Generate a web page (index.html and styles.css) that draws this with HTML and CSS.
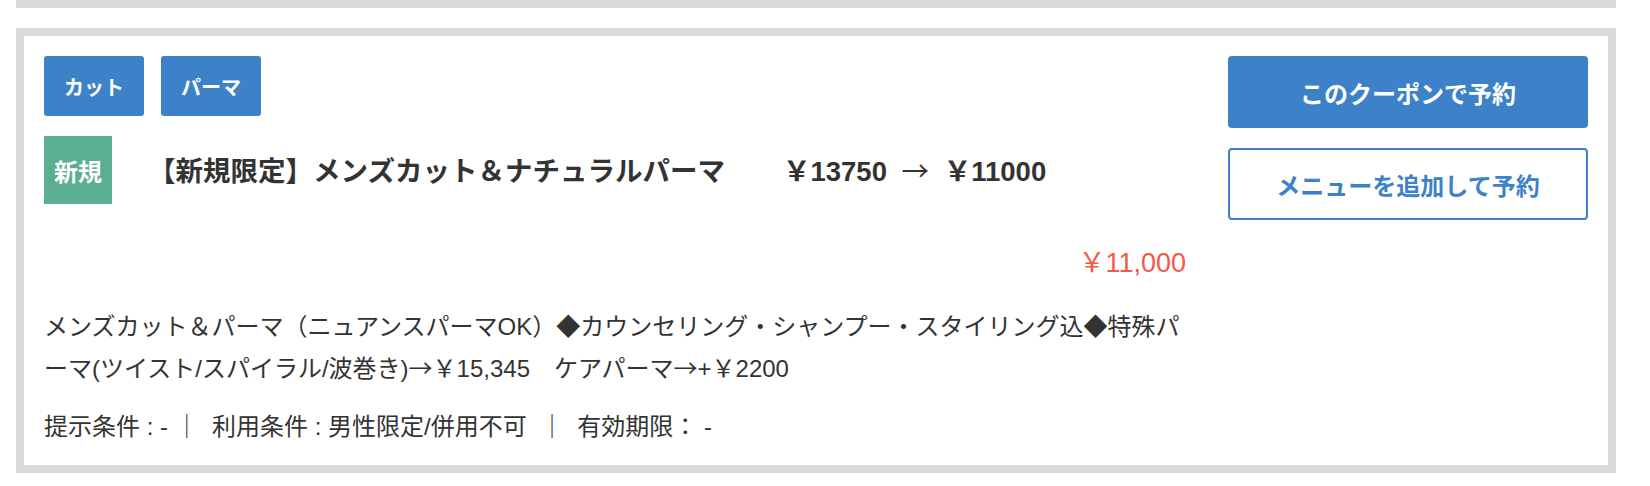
FILE: index.html
```html
<!DOCTYPE html>
<html lang="ja">
<head>
<meta charset="utf-8">
<title>クーポン</title>
<link rel="stylesheet" href="styles.css">
</head>
<body>
<div class="coupon-list">
  <div class="coupon-prev"></div>
  <section class="coupon">
    <div class="coupon-main">
      <div class="tags">
        <span class="tag">カット</span>
        <span class="tag">パーマ</span>
      </div>
      <div class="title-row">
        <span class="badge">新規</span>
        <h2 class="title">【新規限定】メンズカット＆ナチュラルパーマ<span class="title-price">￥13750 <span class="arrow">→</span> ￥11000</span></h2>
      </div>
      <div class="price">￥11,000</div>
      <p class="desc">メンズカット＆パーマ（ニュアンスパーマOK）◆カウンセリング・シャンプー・スタイリング込◆特殊パ<wbr>ーマ(ツイスト/スパイラル/波巻き)<span class="sym">→</span>￥15,345　ケアパーマ<span class="sym">→</span>+￥2200</p>
      <p class="conditions">提示条件 : - ｜  利用条件 : 男性限定/併用不可  ｜  有効期限： -</p>
    </div>
    <div class="coupon-actions">
      <a class="btn btn-primary" href="#">このクーポンで予約</a>
      <a class="btn btn-outline" href="#">メニューを追加して予約</a>
    </div>
  </section>
</div>
</body>
</html>
```
FILE: styles.css
```css
html, body {
  margin: 0;
  padding: 0;
  background: #fff;
}

body {
  font-family: "Liberation Sans", "Noto Sans CJK JP", sans-serif;
  color: #333;
}

.coupon-list {
  width: 1600px;
  margin-left: 16px;
  display: flex;
  flex-direction: column;
  gap: 20px;
}

.coupon-prev {
  height: 8px;
  background: #d9d9d9;
}

.coupon {
  border: 8px solid #d9d9d9;
  background: #fff;
  padding: 20px 20px 18px;
  display: flex;
  gap: 42px;
}

.coupon-main {
  flex: 1;
  min-width: 0;
}

.tags {
  display: flex;
  gap: 17px;
}

.tag {
  width: 100px;
  height: 60px;
  display: flex;
  align-items: center;
  justify-content: center;
  background: #3d82c8;
  color: #fff;
  font-size: 20px;
  font-weight: bold;
  border-radius: 3px;
}

.title-row {
  display: flex;
  align-items: center;
  margin-top: 20px;
}

.badge {
  flex-shrink: 0;
  width: 68px;
  height: 68px;
  display: flex;
  align-items: center;
  justify-content: center;
  background: #5bae91;
  color: #fff;
  font-size: 24px;
  font-weight: bold;
}

.title {
  margin: 0 0 0 36px;
  font-size: 27.5px;
  font-weight: bold;
  line-height: 1.2;
  color: #333;
}

.title-price {
  margin-left: 58px;
}

.arrow {
  font-family: "Noto Sans CJK JP", sans-serif;
  font-weight: normal;
  margin: 0 7px;
}

.sym {
  font-family: "Noto Sans CJK JP", sans-serif;
}

.price {
  margin-top: 39px;
  text-align: right;
  color: #f05a46;
  font-size: 27px;
  line-height: 40px;
}

.desc {
  margin: 24px 0 0;
  font-size: 24px;
  line-height: 40px;
}

.conditions {
  margin: 18px 0 0;
  font-size: 24px;
  line-height: 40px;
  white-space: pre-wrap;
}

.coupon-actions {
  flex-shrink: 0;
  width: 360px;
  display: flex;
  flex-direction: column;
  gap: 20px;
}

.btn {
  box-sizing: border-box;
  height: 72px;
  display: flex;
  align-items: center;
  justify-content: center;
  border-radius: 4px;
  font-size: 24px;
  font-weight: bold;
  text-decoration: none;
}

.btn-primary {
  background: #3d82c8;
  color: #fff;
}

.btn-outline {
  background: #fff;
  border: 2px solid #3d82c8;
  color: #3d82c8;
}
```
